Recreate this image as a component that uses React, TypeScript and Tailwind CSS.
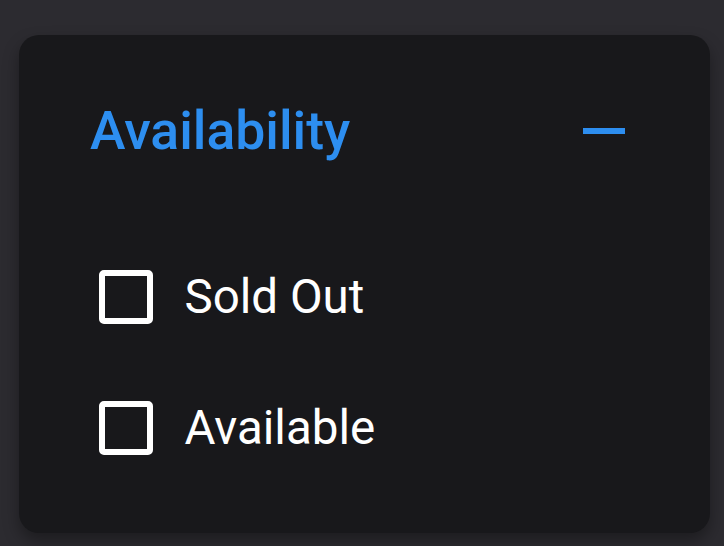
import { useState } from "react";

const options = ["Sold Out", "Available"];

const App = () => {
	const [open, setOpen] = useState(true);
	const [checked, setChecked] = useState<Record<string, boolean>>({});

	return (
		<div className="min-h-[546px] w-full bg-[#2c2b30] px-[19px] pt-[35px] font-['Roboto',sans-serif]">
			<div className="h-[498px] w-[691px] rounded-[20px] bg-[#18181b] pt-[64px] shadow-[0_8px_16px_rgba(0,0,0,0.35)]">
				{/* header row */}
				<div className="flex items-center justify-between pl-[71px] pr-[85px]">
					<h2 className="text-[53.5px] font-medium leading-[64px] text-[#2d8ef0]">
						Availability
					</h2>
					<button
						className="flex h-[40px] w-[42px] items-center justify-center"
						onClick={() => setOpen(!open)}
					>
						<span className="block h-[6px] w-[42px] bg-[#2d8ef0]"></span>
					</button>
				</div>

				{open && (
					<div className="mt-[107px] flex flex-col gap-[77px] pl-[80px]">
						{options.map((opt) => (
							<label
								key={opt}
								className="flex h-[54px] cursor-pointer items-center gap-[31.5px]"
								onClick={() =>
									setChecked((prev) => ({ ...prev, [opt]: !prev[opt] }))
								}
							>
								<span className="block h-[54px] w-[54px] rounded-[5px] border-[6px] border-white">
									{checked[opt] && (
										<span className="block h-full w-full bg-white"></span>
									)}
								</span>
								<span className="text-[47.5px] leading-[54px] text-white">
									{opt}
								</span>
							</label>
						))}
					</div>
				)}
			</div>
		</div>
	);
};

export default App;
